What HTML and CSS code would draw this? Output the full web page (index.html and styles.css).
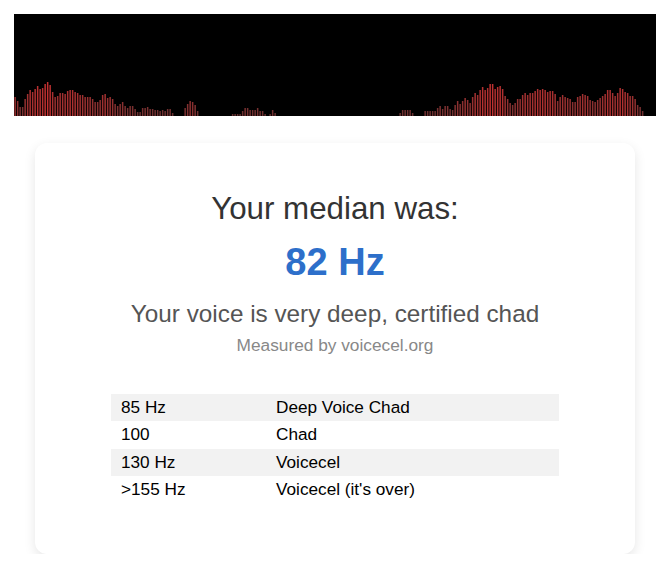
FILE: index.html
```html
<!DOCTYPE html>
<html lang="en">
<head>
<meta charset="utf-8">
<title>Voice result</title>
<link rel="stylesheet" href="styles.css">
</head>
<body>
<div class="page">
  <canvas id="viz" class="viz" width="642" height="102"></canvas>
  <div class="card">
    <h2 class="title">Your median was:</h2>
    <div class="value">82 Hz</div>
    <p class="verdict">Your voice is very deep, certified chad</p>
    <p class="credit">Measured by voicecel.org</p>
    <table class="scale">
      <tr><td class="hz">85 Hz</td><td>Deep Voice Chad</td></tr>
      <tr><td class="hz">100</td><td>Chad</td></tr>
      <tr><td class="hz">130 Hz</td><td>Voicecel</td></tr>
      <tr><td class="hz">&gt;155 Hz</td><td>Voicecel (it's over)</td></tr>
    </table>
  </div>
</div>
<script src="script.js"></script>
</body>
</html>
```

FILE: styles.css
```css
body {
  margin: 0;
  background: #fff;
  font-family: "Liberation Sans", Arial, sans-serif;
}
.page {
  padding: 14px 0 0 8px;
  display: flex;
  flex-direction: column;
  align-items: center;
}
.viz {
  display: block;
  width: 642px;
  height: 102px;
  background: #000;
}
.card {
  width: 600px;
  box-sizing: border-box;
  margin-top: 27px;
  padding: 20px 20px 51px;
  background: #fff;
  border-radius: 12px;
  box-shadow: 0 4px 12px rgba(0, 0, 0, 0.1);
  text-align: center;
}
.title {
  margin: 28px 0 0;
  font-size: 31.3px;
  line-height: 36px;
  font-weight: normal;
  color: #333;
}
.value {
  margin-top: 12px;
  font-size: 38px;
  line-height: 46px;
  font-weight: bold;
  color: #2d6fca;
}
.verdict {
  margin: 15px 0 0;
  font-size: 24.3px;
  line-height: 28px;
  color: #555;
}
.credit {
  margin: 7px 0 0;
  font-size: 17.3px;
  line-height: 20px;
  color: #888;
}
.scale {
  width: 448px;
  margin: 39px auto 0;
  border-collapse: collapse;
  text-align: left;
  font-size: 17.2px;
  color: #000;
}
.scale td {
  padding: 4px 10px;
  line-height: 19.3px;
}
.scale tr:nth-child(odd) {
  background: #f2f2f2;
}
.scale .hz {
  width: 135px;
}
```

FILE: script.js
```js
(function () {
  var c = document.getElementById('viz');
  var ctx = c.getContext('2d');
  var h = [
    19,15,9,9,17,22,26,24,27,30,27,28,32,34,31,24,19,20,23,23,22,25,26,26,24,23,21,21,19,19,
    19,17,14,14,16,21,22,18,19,17,12,10,12,14,10,8,10,10,7,4,4,8,8,9,7,7,6,6,5,6,5,7,7,3,
    0,0,0,0,
    8,12,15,14,11,5,
    0,0,0,0,0,0,0,0,0,0,0,0,0,
    2,2,2,2,5,8,8,6,6,6,8,5,5,2,0,2,6,3
  ];
  while (h.length < 154) h.push(0);
  h = h.concat([3,6,6,6,6,3,0,0,0,0,5,5,5,5,5,8]);
  h = h.concat([
    10,7,10,10,7,6,11,15,12,15,18,16,13,19,23,21,26,29,26,28,32,32,27,29,30,27,20,17,13,11,
    13,17,17,21,23,21,23,23,25,27,26,27,26,24,25,25,22,15,19,21,19,18,17,14,14,19,20,22,21,20,
    16,15,14,16,18,20,22,26,26,23,20,23,28,27,24,23,20,20,17,11,9,5
  ]);
  ctx.fillStyle = '#000';
  ctx.fillRect(0, 0, c.width, c.height);
  for (var i = 0; i < h.length; i++) {
    var v = h[i];
    if (!v) continue;
    var r = Math.min(205, 95 + v * 3);
    ctx.fillStyle = 'rgb(' + Math.round(r) + ',48,48)';
    ctx.fillRect(0.4 + i * 2.5, c.height - v, 1.5, v);
  }
})();
```
